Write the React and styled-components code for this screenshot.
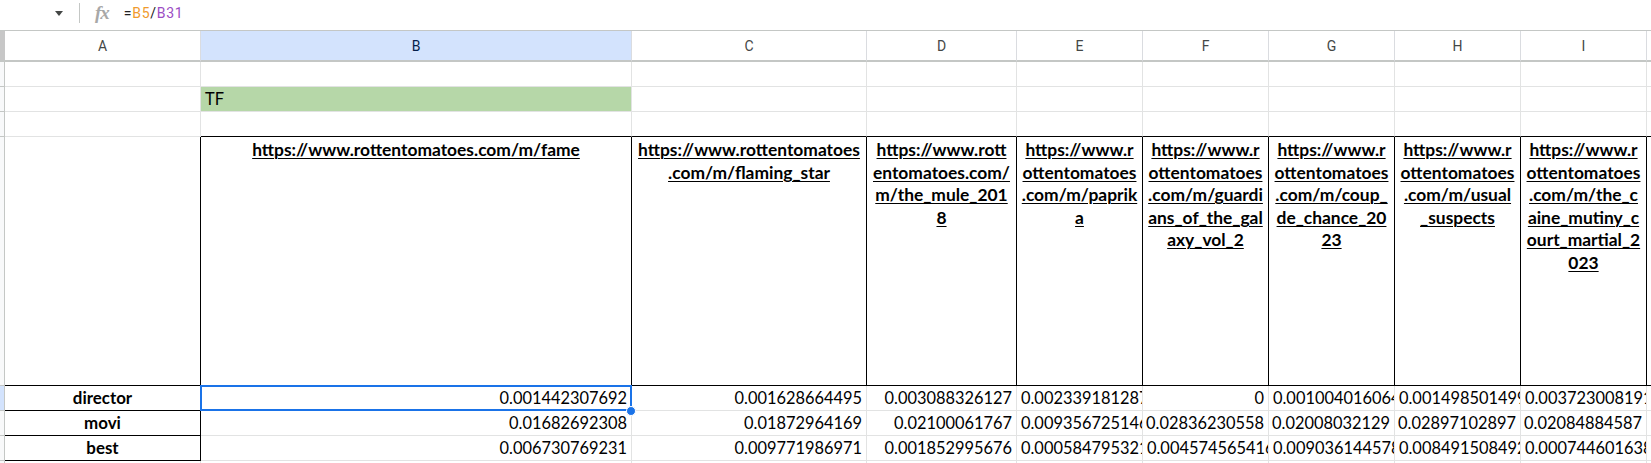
import React from "react";
import styled, { createGlobalStyle, css } from "styled-components";

const GRID = "#e2e3e3";
const BLACK = "#000000";

const GlobalStyle = createGlobalStyle`
  html, body {
    margin: 0;
    padding: 0;
    background: #ffffff;
    overflow: hidden;
  }
  body {
    font-family: Lato, "Liberation Sans", Arial, sans-serif;
  }
`;

const FormulaBar = styled.div`
  display: flex;
  align-items: center;
  height: 31px;
  box-sizing: border-box;
  padding-bottom: 4px;
  border-bottom: 1px solid #c4c7c5;
  background: #ffffff;
`;

const NameArrow = styled.span`
  width: 0;
  height: 0;
  margin-left: 55px;
  border-left: 4px solid transparent;
  border-right: 4px solid transparent;
  border-top: 5px solid #444746;
`;

const Divider = styled.span`
  width: 1px;
  height: 20px;
  margin-left: 16px;
  background: #c4c7c5;
`;

const FxIcon = styled.span`
  margin-left: 15px;
  font-family: "Liberation Serif", "DejaVu Serif", serif;
  font-style: italic;
  font-weight: bold;
  font-size: 19px;
  letter-spacing: -1px;
  color: #a8a8a8;
`;

const Formula = styled.span`
  margin-left: 15px;
  font-family: Roboto, "Liberation Sans", sans-serif;
  font-size: 14px;
  letter-spacing: 0.7px;
  color: #202124;
`;

const Ref = styled.span`
  color: ${(p) => p.$color};
`;

const Sheet = styled.div`
  display: grid;
  grid-template-columns: 5px 196px 431px 235px 150px repeat(5, 126px) 1fr;
  grid-template-rows: 31px 25px 25px 25px 249px 25px 25px 25px 25px;
`;

const Corner = styled.div`
  background: #c7c7c7;
  border-bottom: 2px solid #c4c7c5;
`;

const RowHead = styled.div`
  box-sizing: border-box;
  background: ${(p) => (p.$selected ? "#d3e3fd" : "#f8f9fa")};
  border-right: 1px solid #c4c7c5;
  border-bottom: 1px solid #c4c7c5;
`;

const ColHead = styled.div`
  display: flex;
  align-items: center;
  justify-content: center;
  box-sizing: border-box;
  padding-top: 1px;
  border-right: 1px solid #dadce0;
  border-bottom: 2px solid #c4c7c5;
  background: ${(p) => (p.$selected ? "#d3e3fd" : "#ffffff")};
  color: ${(p) => (p.$selected ? "#041e49" : "#444746")};
  font-family: Roboto, "Liberation Sans", sans-serif;
  font-size: 14px;
`;

const Cell = styled.div`
  position: relative;
  display: flex;
  align-items: flex-end;
  justify-content: ${(p) => p.$justify || "flex-start"};
  box-sizing: border-box;
  min-width: 0;
  padding: 0 4px 2px 4px;
  overflow: ${(p) => (p.$selected ? "visible" : "hidden")};
  white-space: nowrap;
  background: ${(p) => p.$bg || "#ffffff"};
  border-right: 1px solid ${(p) => p.$right || GRID};
  border-bottom: 1px solid ${(p) => p.$bottom || GRID};
  font-size: 16.4px;
  line-height: 20px;
  color: #000000;
  ${(p) =>
    p.$bold &&
    css`
      font-weight: 700;
      font-size: 16.9px;
    `}
`;

const LinkCell = styled(Cell)`
  flex-direction: column;
  align-items: center;
  justify-content: flex-start;
  padding: 2px 1px 0 1px;
  font-weight: 700;
  font-size: 17.4px;
  line-height: 22.5px;
`;

const LinkLine = styled.span`
  text-decoration: underline;
  text-underline-offset: 2px;
  text-decoration-thickness: 1px;
`;

const Selection = styled.div`
  position: absolute;
  top: -1px;
  left: -1px;
  right: -1px;
  bottom: -1px;
  border: 2px solid #1a73e8;
  pointer-events: none;
`;

const FillHandle = styled.span`
  position: absolute;
  right: -5px;
  bottom: -6px;
  width: 10px;
  height: 10px;
  box-sizing: border-box;
  border-radius: 50%;
  border: 1px solid #ffffff;
  background: #1a73e8;
  z-index: 3;
`;

const columns = ["A", "B", "C", "D", "E", "F", "G", "H", "I", ""];

const links = [
  ["https://www.rottentomatoes.com/m/fame"],
  ["https://www.rottentomatoes", ".com/m/flaming_star"],
  ["https://www.rott", "entomatoes.com/", "m/the_mule_201", "8"],
  ["https://www.r", "ottentomatoes", ".com/m/paprik", "a"],
  ["https://www.r", "ottentomatoes", ".com/m/guardi", "ans_of_the_gal", "axy_vol_2"],
  ["https://www.r", "ottentomatoes", ".com/m/coup_", "de_chance_20", "23"],
  ["https://www.r", "ottentomatoes", ".com/m/usual", "_suspects"],
  ["https://www.r", "ottentomatoes", ".com/m/the_c", "aine_mutiny_c", "ourt_martial_2", "023"],
];

const data = [
  {
    term: "director",
    values: [
      "0.001442307692",
      "0.001628664495",
      "0.003088326127",
      "0.002339181287",
      "0",
      "0.001004016064",
      "0.001498501499",
      "0.003723008191",
    ],
  },
  {
    term: "movi",
    values: [
      "0.01682692308",
      "0.01872964169",
      "0.02100061767",
      "0.009356725146",
      "0.02836230558",
      "0.02008032129",
      "0.02897102897",
      "0.02084884587",
    ],
  },
  {
    term: "best",
    values: [
      "0.006730769231",
      "0.009771986971",
      "0.001852995676",
      "0.0005847953216",
      "0.004574565416",
      "0.009036144578",
      "0.008491508492",
      "0.0007446016381",
    ],
  },
];

// columns 1..8 of the bordered block are B..I (index 1..8 in `columns`)
const inBlock = (c) => c >= 1 && c <= 8;

function bordersFor(row, c) {
  let right = GRID;
  let bottom = GRID;
  if (c === 0 && row >= 4 && row <= 7) right = BLACK;
  if (row === 4 && inBlock(c)) right = BLACK;
  if (row === 3 && c >= 1) bottom = BLACK;
  if (row === 4) bottom = BLACK;
  if (c === 0 && row >= 5 && row <= 7) bottom = BLACK;
  return { right, bottom };
}

function renderRow(row) {
  const out = [<RowHead key={`rh${row}`} $selected={row === 5} />];
  columns.forEach((_, c) => {
    const { right, bottom } = bordersFor(row, c);
    const key = `r${row}c${c}`;

    if (row === 2 && c === 1) {
      out.push(
        <Cell key={key} $right={right} $bottom={bottom} $bg="#b6d7a8">
          TF
        </Cell>
      );
      return;
    }

    if (row === 4 && inBlock(c)) {
      out.push(
        <LinkCell key={key} $right={right} $bottom={bottom}>
          {links[c - 1].map((line, i) => (
            <LinkLine key={i}>{line}</LinkLine>
          ))}
        </LinkCell>
      );
      return;
    }

    if (row >= 5 && row <= 7) {
      const item = data[row - 5];
      if (c === 0) {
        out.push(
          <Cell key={key} $right={right} $bottom={bottom} $justify="center" $bold>
            {item.term}
          </Cell>
        );
        return;
      }
      if (inBlock(c)) {
        const value = item.values[c - 1];
        // long values in the narrow columns are cut at the cell edge
        const fits = c <= 3 ? true : value.length < 14;
        const selected = row === 5 && c === 1;
        out.push(
          <Cell
            key={key}
            $right={right}
            $bottom={bottom}
            $justify={fits ? "flex-end" : "flex-start"}
            $selected={selected}
          >
            {value}
            {selected && (
              <>
                <Selection />
                <FillHandle />
              </>
            )}
          </Cell>
        );
        return;
      }
    }

    out.push(<Cell key={key} $right={right} $bottom={bottom} />);
  });
  return out;
}

export default function App() {
  return (
    <>
      <GlobalStyle />
      <FormulaBar>
        <NameArrow />
        <Divider />
        <FxIcon>fx</FxIcon>
        <Formula>
          =<Ref $color="#f09a2c">B5</Ref>/<Ref $color="#9b4dc4">B31</Ref>
        </Formula>
      </FormulaBar>
      <Sheet>
        <Corner />
        {columns.map((name, c) => (
          <ColHead key={`h${c}`} $selected={name === "B"}>
            {name}
          </ColHead>
        ))}
        {[1, 2, 3, 4, 5, 6, 7, 8].map((row) => renderRow(row))}
      </Sheet>
    </>
  );
}
